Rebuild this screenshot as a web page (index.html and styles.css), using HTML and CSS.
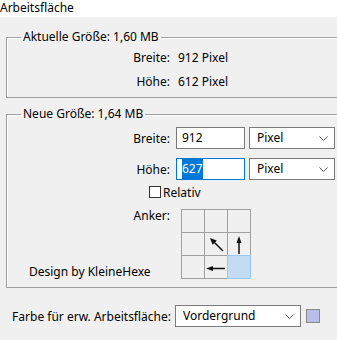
FILE: index.html
```html
<!DOCTYPE html>
<html lang="de">
<head>
    <meta charset="UTF-8">
    <meta name="viewport" content="width=device-width, initial-scale=1.0">
    <title>Arbeitsfläche</title>
    <link rel="stylesheet" href="styles.css">
</head>
<body>
    <div class="title">Arbeitsfläche</div>

    <div class="panel">
        <fieldset class="group current">
            <legend>Aktuelle Größe: 1,60 MB</legend>
            <div class="info-row">
                <span class="info-label">Breite:</span>
                <span>912 Pixel</span>
            </div>
            <div class="info-row">
                <span class="info-label">Höhe:</span>
                <span>612 Pixel</span>
            </div>
        </fieldset>

        <fieldset class="group new">
            <legend>Neue Größe: 1,64 MB</legend>
            <div class="field-row">
                <span class="field-label">Breite:</span>
                <div class="textbox">912</div>
                <div class="select unit">Pixel
                    <svg class="chevron" width="9" height="5" viewBox="0 0 9 5"><path d="M0.5 0.5 L4.5 4.5 L8.5 0.5" fill="none" stroke="#555" stroke-width="1"/></svg>
                </div>
            </div>
            <div class="field-row second">
                <span class="field-label">Höhe:</span>
                <div class="textbox focused"><span class="selected">627</span></div>
                <div class="select unit">Pixel
                    <svg class="chevron" width="9" height="5" viewBox="0 0 9 5"><path d="M0.5 0.5 L4.5 4.5 L8.5 0.5" fill="none" stroke="#555" stroke-width="1"/></svg>
                </div>
            </div>
            <label class="check-row">
                <span class="checkbox"></span>
                <span>Relativ</span>
            </label>
            <div class="anchor-row">
                <div class="anchor-side">
                    <span class="anchor-label">Anker:</span>
                    <span class="credit">Design by KleineHexe</span>
                </div>
                <div class="anchor-grid">
                    <div class="cell"></div>
                    <div class="cell"></div>
                    <div class="cell"></div>
                    <div class="cell"></div>
                    <div class="cell">
                        <svg width="22" height="22" viewBox="0 0 22 22">
                            <path d="M18 18 L9 9" stroke="#111" stroke-width="1.5"/>
                            <polygon points="5,5 11.8,7.6 7.6,11.8" fill="#111"/>
                        </svg>
                    </div>
                    <div class="cell">
                        <svg width="22" height="22" viewBox="0 0 22 22">
                            <path d="M11 21 L11 8" stroke="#111" stroke-width="1.5"/>
                            <polygon points="11,3 8.5,10 13.5,10" fill="#111"/>
                        </svg>
                    </div>
                    <div class="cell"></div>
                    <div class="cell">
                        <svg width="22" height="22" viewBox="0 0 22 22">
                            <path d="M20 12.5 L7 12.5" stroke="#111" stroke-width="1.5"/>
                            <polygon points="1,12.5 8,10 8,15" fill="#111"/>
                        </svg>
                    </div>
                    <div class="cell active"></div>
                </div>
            </div>
        </fieldset>

        <div class="color-row">
            <span class="color-label">Farbe für erw. Arbeitsfläche:</span>
            <div class="select fill">Vordergrund
                <svg class="chevron" width="9" height="5" viewBox="0 0 9 5"><path d="M0.5 0.5 L4.5 4.5 L8.5 0.5" fill="none" stroke="#555" stroke-width="1"/></svg>
            </div>
            <div class="swatch"></div>
        </div>
    </div>
</body>
</html>
```

FILE: styles.css
```css
body {
    margin: 0;
    background: #f0f0f0;
    color: #000;
    font-family: 'Noto Sans', 'Open Sans', sans-serif;
    font-size: 12px;
}

.title {
    height: 17px;
    line-height: 16px;
    background: #fff;
}

.panel {
    padding-left: 6px;
}

/* group boxes run off the right edge, so no right border */
.group {
    margin: 0;
    padding: 0;
    border: 1px solid #a0a0a0;
    border-right: none;
    box-shadow: inset 1px 1px 0 #fff;
    min-inline-size: 0;
}

.group legend {
    margin-left: 14px;
    padding: 0 2px;
    line-height: 16px;
}

.current {
    margin-top: 12px;
    padding-bottom: 3px;
}

.new {
    margin-top: 8px;
    padding-top: 5px;
    padding-bottom: 8px;
}

.info-row {
    display: flex;
    line-height: 24px;
}

.current .info-row:first-of-type {
    margin-top: 1px;
}

.info-label {
    width: 171px;
    padding-right: 8px;
    box-sizing: border-box;
    text-align: right;
}

.field-row {
    display: flex;
    align-items: center;
    height: 22px;
}

.field-row.second {
    margin-top: 9px;
}

.field-label {
    width: 169px;
    padding-right: 6px;
    box-sizing: border-box;
    text-align: right;
}

.textbox {
    width: 69px;
    height: 22px;
    box-sizing: border-box;
    border: 1px solid #7a7a7a;
    background: #fff;
    padding-left: 5px;
    line-height: 20px;
}

.textbox.focused {
    border-color: #0078d7;
}

.selected {
    background: #0078d7;
    color: #fff;
    padding: 1px 0 2px;
}

.select {
    position: relative;
    height: 22px;
    box-sizing: border-box;
    border: 1px solid #7a7a7a;
    background: #fff;
    padding-left: 7px;
    line-height: 20px;
}

.chevron {
    position: absolute;
    right: 6px;
    top: 8px;
}

.unit {
    width: 86px;
    margin-left: 4px;
}

.check-row {
    display: flex;
    align-items: center;
    gap: 2px;
    height: 12px;
    margin-top: 6px;
    padding-left: 142px;
}

.checkbox {
    width: 12px;
    height: 12px;
    box-sizing: border-box;
    border: 1px solid #333;
    background: #fff;
}

.anchor-row {
    display: flex;
    margin-top: 11px;
}

.anchor-side {
    width: 174px;
    display: flex;
    flex-direction: column;
    justify-content: space-between;
}

.anchor-label {
    align-self: flex-end;
    padding-right: 11px;
    line-height: 13px;
}

.credit {
    padding-left: 22px;
    line-height: 14px;
}

.anchor-grid {
    display: grid;
    grid-template-columns: repeat(3, 22px);
    grid-template-rows: repeat(3, 22px);
    gap: 1px;
    padding: 1px;
    background: #a0a0a0;
}

.cell {
    background: #f0f0f0;
}

.cell svg {
    display: block;
}

.cell.active {
    background: #c3dcf3;
    box-shadow: 0 0 0 1px #99c9f0;
}

.color-row {
    display: flex;
    align-items: center;
    margin-top: 17px;
    margin-left: -6px;
}

.color-label {
    width: 171px;
    text-align: right;
}

.fill {
    width: 126px;
    margin-left: 4px;
}

.swatch {
    width: 14px;
    height: 14px;
    box-sizing: border-box;
    margin-left: 5px;
    border: 1px solid #8a8a8a;
    background: #b9bde9;
}
```
